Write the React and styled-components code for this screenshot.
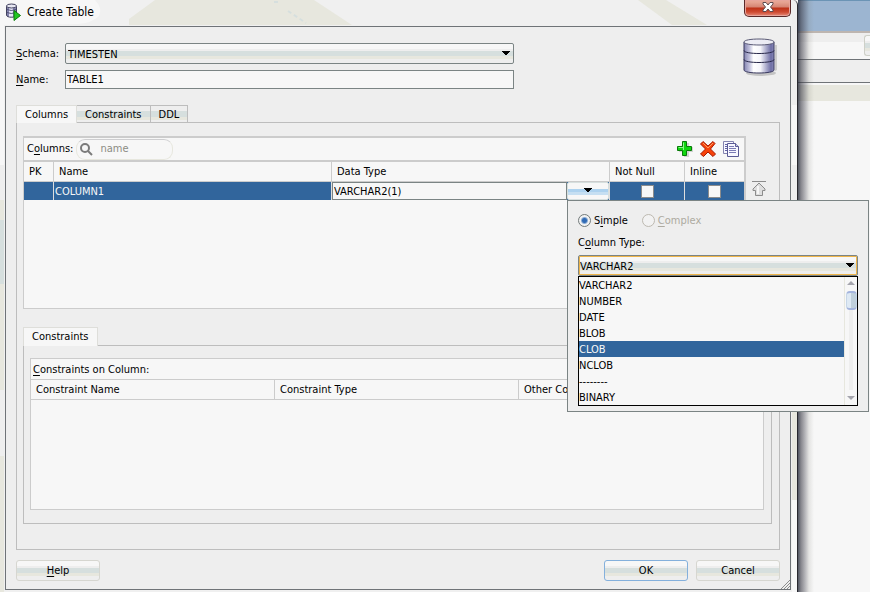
import { useState } from "react";
import styled, { createGlobalStyle, css } from "styled-components";

const types = ["VARCHAR2", "NUMBER", "DATE", "BLOB", "CLOB", "NCLOB", "--------", "BINARY"];

export default function App() {
    const [highlighted, setHighlighted] = useState("CLOB");

    return (
        <>
            <GlobalStyle />
            <Screen>
                <Dialog>
                    <TitleBar>
                        <Reflections />
                        <TitleIcon />
                        <h1>Create Table</h1>
                        <CloseButton aria-label="Close">
                            <CloseIcon />
                        </CloseButton>
                    </TitleBar>
                    <Content>
                        <Top>
                            <Fields>
                                <label htmlFor="schema"><u>S</u>chema:</label>
                                <SelectBox>
                                    <select id="schema">
                                        <option>TIMESTEN</option>
                                    </select>
                                    <Arrow />
                                </SelectBox>
                                <label htmlFor="table-name"><u>N</u>ame:</label>
                                <TextInput id="table-name" defaultValue="TABLE1" />
                            </Fields>
                            <DatabaseIcon />
                        </Top>

                        <Tabs role="tablist">
                            <Tab role="tab" aria-selected="true" $active>Columns</Tab>
                            <Tab role="tab" aria-selected="false">Constraints</Tab>
                            <Tab role="tab" aria-selected="false">DDL</Tab>
                        </Tabs>
                        <Panel>
                            <ColumnsArea>
                                <ColumnsBox>
                                    <Toolbar>
                                        <label htmlFor="search">C<u>o</u>lumns:</label>
                                        <Search>
                                            <SearchIcon />
                                            <input id="search" placeholder="name" />
                                        </Search>
                                        <IconButton aria-label="Add column"><PlusIcon /></IconButton>
                                        <IconButton aria-label="Remove column"><RemoveIcon /></IconButton>
                                        <IconButton aria-label="Copy columns"><CopyIcon /></IconButton>
                                    </Toolbar>
                                    <GridArea>
                                        <ColumnsTable>
                                            <colgroup>
                                                <col className="pk" />
                                                <col />
                                                <col />
                                                <col className="not-null" />
                                                <col className="inline" />
                                            </colgroup>
                                            <thead>
                                                <tr>
                                                    <th>PK</th>
                                                    <th>Name</th>
                                                    <th>Data Type</th>
                                                    <th>Not Null</th>
                                                    <th>Inline</th>
                                                </tr>
                                            </thead>
                                            <tbody>
                                                <tr>
                                                    <td></td>
                                                    <td>COLUMN1</td>
                                                    <td>
                                                        <TypeEditor>
                                                            <input aria-label="Data type" defaultValue="VARCHAR2(1)" />
                                                            <TypeAnchor>
                                                                <TypeButton aria-label="Choose data type"><Arrow /></TypeButton>
                                                                <TypePopup highlighted={highlighted} onPick={setHighlighted} />
                                                            </TypeAnchor>
                                                        </TypeEditor>
                                                    </td>
                                                    <td><CheckBox type="checkbox" aria-label="Not Null" /></td>
                                                    <td><CheckBox type="checkbox" aria-label="Inline" /></td>
                                                </tr>
                                            </tbody>
                                        </ColumnsTable>
                                    </GridArea>
                                </ColumnsBox>
                                <SideButtons>
                                    <IconButton aria-label="Move to top"><MoveTopIcon /></IconButton>
                                </SideButtons>
                            </ColumnsArea>

                            <ConstraintsArea>
                                <Tabs role="tablist">
                                    <Tab role="tab" aria-selected="true" $active>Constraints</Tab>
                                </Tabs>
                                <ConstraintsPanel>
                                    <ConstraintsBox>
                                        <ConstraintsTable>
                                            <caption><u>C</u>onstraints on Column:</caption>
                                            <thead>
                                                <tr>
                                                    <th>Constraint Name</th>
                                                    <th>Constraint Type</th>
                                                    <th>Other Co</th>
                                                </tr>
                                            </thead>
                                        </ConstraintsTable>
                                    </ConstraintsBox>
                                </ConstraintsPanel>
                            </ConstraintsArea>
                        </Panel>

                        <Footer>
                            <Button className="help"><u>H</u>elp</Button>
                            <Button $primary>OK</Button>
                            <Button>Cancel</Button>
                        </Footer>
                        <ResizeGrip />
                    </Content>
                </Dialog>
                <Behind>
                    <div className="title" />
                    <div className="tools"><span /></div>
                    <div className="bar" />
                    <div className="line" />
                </Behind>
            </Screen>
        </>
    );
}

function TypePopup({ highlighted, onPick }) {
    return (
        <Popup>
            <Radios>
                <label><input type="radio" name="kind" defaultChecked /><span>S<u>i</u>mple</span></label>
                <label className="disabled"><input type="radio" name="kind" disabled /><span><u>C</u>omplex</span></label>
            </Radios>
            <TypeLabel htmlFor="column-type">C<u>o</u>lumn Type:</TypeLabel>
            <SelectBox $focused>
                <select id="column-type">
                    <option>VARCHAR2</option>
                </select>
                <Arrow />
            </SelectBox>
            <TypeList>
                <ul role="listbox" aria-label="Column types">
                    {types.map((type) => (
                        <TypeOption
                            key={type}
                            role="option"
                            aria-selected={type === highlighted}
                            $selected={type === highlighted}
                            onMouseEnter={() => onPick(type)}
                        >
                            {type}
                        </TypeOption>
                    ))}
                </ul>
                <ScrollBar>
                    <svg width="8" height="4"><path d="M0 4L4 0L8 4Z" fill="#a5a5ad" /></svg>
                    <div><ScrollThumb /></div>
                    <svg width="8" height="4"><path d="M0 0L4 4L8 0Z" fill="#a5a5ad" /></svg>
                </ScrollBar>
            </TypeList>
        </Popup>
    );
}

function Arrow() {
    return (
        <svg className="arrow" width="8" height="4" shapeRendering="crispEdges">
            <path d="M0 0H8V1H7V2H6V3H5V4H3V3H2V2H1V1H0Z" fill="#000" />
        </svg>
    );
}

function Reflections() {
    return (
        <svg className="reflections" width="790" height="25">
            <path d="M0 0H95Q103 8 99 16Q92 23 78 24L0 25Z" fill="#f7f7f7" />
            <path d="M129 25V19L155 0H314L352 25Z" fill="#e7e7de" />
            <path d="M638 0H666L707 25H672Z" fill="#e7e7de" />
            <path d="M274 2H280M288 11L306 23" stroke="#d6dfde" strokeWidth="2" strokeDasharray="4 3" />
        </svg>
    );
}

function TitleIcon() {
    return (
        <svg width="16" height="18" viewBox="0 0 16 18">
            <path d="M1.500 3V12C1.500 15 11.500 15 11.500 12V3Z" fill="#8484ad" stroke="#42425f" />
            <path d="M4 4H8V13.500H4Z" fill="#e7e7f7" />
            <ellipse cx="6.500" cy="3" rx="5" ry="2" fill="#e7e7f2" stroke="#42425f" />
            <path d="M2 6.500Q6 8.500 11 6.500M2 9.500Q6 11.500 11 9.500" stroke="#52527b" fill="none" />
            <path d="M9 7.500L15.500 12.500L9 17.500Z" fill="#21c621" stroke="#087b08" />
        </svg>
    );
}

function CloseIcon() {
    return (
        <svg width="12" height="10" viewBox="0 0 12 10">
            <path d="M1 .5H4L6 3L8 .5H11V2L8.500 5L11 8V9.500H8L6 7L4 9.500H1V8L3.500 5L1 2Z" fill="#fff" stroke="#5c4a4f" />
        </svg>
    );
}

function DatabaseIcon() {
    return (
        <svg width="36" height="40" viewBox="0 0 36 40">
            <defs>
                <linearGradient id="steel">
                    <stop offset="0" stopColor="#8484b0" />
                    <stop offset=".18" stopColor="#c0c0dc" />
                    <stop offset=".32" stopColor="#fff" />
                    <stop offset=".55" stopColor="#f5f5fa" />
                    <stop offset=".9" stopColor="#6e6ea5" />
                    <stop offset="1" stopColor="#8a8ab8" />
                </linearGradient>
            </defs>
            <ellipse cx="19" cy="36" rx="15" ry="3" fill="#999" opacity=".5" />
            <path d="M33 8V34L35 33V8Z" fill="#aaa" opacity=".5" />
            <path d="M2 5V33C2 37 32 37 32 33V5Z" fill="url(#steel)" stroke="#39395f" />
            <path d="M2 5C2 1 32 1 32 5C32 9 2 9 2 5Z" fill="#ececf4" stroke="#5a5a75" />
            <path d="M2 13.500C2 17.500 32 17.500 32 13.500M2 22.500C2 26.500 32 26.500 32 22.500" fill="none" stroke="#29294a" />
        </svg>
    );
}

function SearchIcon() {
    return (
        <svg width="13" height="13" viewBox="0 0 13 13">
            <circle cx="5" cy="5" r="4" fill="none" stroke="#7b7b7b" strokeWidth="2" />
            <path d="M8 8L12 12" stroke="#7b7b7b" strokeWidth="2" />
        </svg>
    );
}

function PlusIcon() {
    return (
        <svg width="16" height="16" viewBox="0 0 16 16">
            <path d="M7 2H12V6H16V11H12V16H7V11H2V7Z" fill="#999" opacity=".4" />
            <path d="M5.500 .5H9.500V5.500H14.500V9.500H9.500V14.500H5.500V9.500H.5V5.500H5.500Z" fill="#10d610" stroke="#087b08" />
            <path d="M6.500 9V1.500M1.500 6.500H6" stroke="#8cf78c" fill="none" />
        </svg>
    );
}

function RemoveIcon() {
    return (
        <svg width="16" height="16" viewBox="0 0 16 16">
            <path d="M3 .5L8 5L13 .5L15 2.500L10.500 8L15.500 13L13 15.500L8 11L3.500 15.500L.5 13L5.500 8L.5 3Z" fill="#f7420a" stroke="#a51800" />
            <path d="M3 2L8 7L13 2" stroke="#ff9c63" fill="none" />
        </svg>
    );
}

function CopyIcon() {
    return (
        <svg width="16" height="16" viewBox="0 0 16 16">
            <path d="M.5 .5H10.500V12.500H.5Z" fill="#f7f7ff" stroke="#8484b0" />
            <path d="M2 3.500H4M2 5.500H4M2 7.500H4M2 9.500H4" stroke="#6363a5" />
            <path d="M4.500 2.500H12.500L15.500 5.500V15.500H4.500Z" fill="#f7f7ff" stroke="#5a5a94" />
            <path d="M12.500 2.500V5.500H15.500" fill="#c6c6e7" stroke="#5a5a94" />
            <path d="M6 5.500H11M6 7.500H13M6 9.500H13M6 11.500H13" stroke="#7b7bb5" />
        </svg>
    );
}

function MoveTopIcon() {
    return (
        <svg width="16" height="16" viewBox="0 0 16 16">
            <path d="M1 .5H15" stroke="#8c8c8c" />
            <path d="M8 2L14 8V9.500H11.500V14.500H4.500V9.500H2V8Z" fill="#dedede" stroke="#8c8c8c" />
            <path d="M7 5V13" stroke="#f7f7f7" strokeWidth="2" />
        </svg>
    );
}

function ResizeGrip() {
    return (
        <svg className="grip" width="9" height="9" viewBox="0 0 9 9">
            <path d="M0 9L9 0M3 9L9 3M6 9L9 6" stroke="#8c8c8c" />
        </svg>
    );
}

const GlobalStyle = createGlobalStyle`
    *{
        box-sizing: border-box;
    }
    body{
        margin: 0;
        background-color: #f7f7f7;
        color: #000000;
    }
    body, button, input, select{
        font-family: "DejaVu Sans Condensed", "Noto Sans", sans-serif;
        font-size: 11px;
        line-height: 14px;
    }
    button, input, select{
        margin: 0;
        padding: 0;
        color: inherit;
    }
    svg{
        display: block;
        flex-shrink: 0;
    }
    u{
        text-underline-offset: 2px;
    }
`;

const glossy = css`
    background: linear-gradient(#f7f7f7 5px, #eeeeee 5px 7px, #d6dfde 7px 12px, #e7e7de 12px 15px, #eeeeee 15px);
`;

const Screen = styled.div`
    display: flex;
    min-height: 100vh;
    overflow: hidden;
`;

const Dialog = styled.main`
    flex: 1;
    min-width: 0;
    display: flex;
    flex-direction: column;
    padding: 0 6px 2px 5px;
    border-right: 1px solid #29292f;
    border-top-right-radius: 5px;
    background: linear-gradient(#f7f7f7 165px, #eeeeee 165px 200px, #e7e7de 200px 220px, #d6dfde 220px 284px, #e7e7de 284px 390px, #eeeeee 390px 456px, #e7e7de 456px) left / 4px 100% no-repeat,
        linear-gradient(#eeeeee 105px, #f7f7f7 105px 165px, #eeeeee 165px 412px, #e7e7de 412px 500px, #f7f7f7 500px) right / 5px 100% no-repeat,
        #f0f0f0;
`;

const TitleBar = styled.header`
    position: relative;
    display: flex;
    align-items: flex-start;
    gap: 6px;
    height: 26px;
    h1{
        position: relative;
        flex: 1;
        margin: 0;
        padding-top: 4px;
        font-size: 12px;
        line-height: 16px;
        font-weight: normal;
    }
    > svg{
        position: relative;
        margin-top: 3px;
    }
    > .reflections{
        position: absolute;
        top: 0;
        left: -5px;
        margin: 0;
    }
`;

const CloseButton = styled.button`
    position: relative;
    display: flex;
    align-items: center;
    justify-content: center;
    width: 47px;
    height: 17px;
    padding-bottom: 2px;
    border: 1px solid #5a2929;
    border-top: none;
    border-radius: 0 0 5px 5px;
    background: linear-gradient(#e7a594 2px, #d68473 7px, #bd3118 8px, #ce4a31 12px, #e78c7b 16px);
    box-shadow: inset 0 0 0 1px #e7a59c;
`;

const Content = styled.div`
    position: relative;
    flex: 1;
    display: flex;
    flex-direction: column;
    padding: 16px 10px 8px;
    border: 1px solid #6f7377;
    background-color: #eeeeee;
    > .grip{
        position: absolute;
        right: 0;
        bottom: 0;
    }
`;

const Top = styled.div`
    display: flex;
    justify-content: space-between;
    margin-bottom: 9px;
    > svg{
        margin: -6px 2px 0 0;
    }
`;

const Fields = styled.div`
    display: grid;
    grid-template-columns: 49px minmax(100px, 449px);
    row-gap: 6px;
    align-content: start;
    align-items: center;
    flex: 1;
    height: 53px;
    label{
        white-space: nowrap;
    }
`;

const SelectBox = styled.div`
    position: relative;
    display: flex;
    select{
        flex: 1;
        height: 21px;
        padding: 2px 0 0 2px;
        appearance: none;
        border: 1px solid #7b8484;
        border-radius: 2px;
        outline: none;
        ${glossy}
        ${(props) => props.$focused && css`
            padding-left: 1px;
            box-shadow: inset 0 0 0 1px #efb54a;
        `}
    }
    .arrow{
        position: absolute;
        top: 8px;
        right: 4px;
        pointer-events: none;
    }
`;

const TextInput = styled.input`
    height: 19px;
    padding-left: 1px;
    border: 1px solid #7b8484;
    background-color: #f7f7f7;
`;

const Tabs = styled.div`
    display: flex;
    height: 17px;
`;

const Tab = styled.button`
    height: 17px;
    padding: 1px 8px 0;
    border: 1px solid #bdbdbd;
    border-left: none;
    border-bottom: none;
    background: linear-gradient(#eeeeee 5px, #d6dfde 5px 11px, #e7e7de 11px 14px, #eeeeee 14px);
    ${(props) => props.$active && css`
        height: 18px;
        padding-top: 0;
        border-color: #dededa;
        border-left: 1px solid #dededa;
        background: #f7f7f7;
        z-index: 1;
    `}
`;

const Panel = styled.section`
    flex: 1;
    display: flex;
    flex-direction: column;
    padding: 13px 0 25px 6px;
    border: 1px solid #bdbdbd;
`;

const ColumnsArea = styled.div`
    flex: 173 0 173px;
    display: flex;
`;

const ColumnsBox = styled.div`
    flex: 1;
    min-width: 0;
    display: flex;
    flex-direction: column;
`;

const SideButtons = styled.div`
    width: 33px;
    padding: 45px 0 0 5px;
`;

const IconButton = styled.button`
    border: none;
    background: none;
`;

const Toolbar = styled.div`
    display: flex;
    align-items: center;
    gap: 3px;
    height: 26px;
    padding: 0 5px 0 3px;
    border: 2px solid #cccccc;
    border-left-width: 1px;
    background-color: #f7f7f7;
    ${IconButton}{
        margin-left: 4px;
    }
`;

const Search = styled.div`
    display: flex;
    align-items: center;
    gap: 7px;
    width: 97px;
    height: 21px;
    margin-right: auto;
    padding-left: 3px;
    border: 1px solid #e7e7de;
    border-top-color: #ceced0;
    border-radius: 9px;
    input{
        width: 60px;
        border: none;
        background: none;
        outline: none;
    }
    input::placeholder{
        color: #8c8c84;
        opacity: 1;
    }
`;

const GridArea = styled.div`
    flex: 1;
    border: 1px solid #cccccc;
    border-top: none;
    border-right-width: 2px;
    background-color: #f7f7f7;
`;

const ColumnsTable = styled.table`
    width: 100%;
    table-layout: fixed;
    border-collapse: separate;
    border-spacing: 0;
    .pk{
        width: 30px;
    }
    .not-null{
        width: 75px;
    }
    .inline{
        width: 59px;
    }
    th{
        height: 20px;
        padding: 0 5px;
        border-right: 1px solid #cccccc;
        border-bottom: 1px solid #cccccc;
        font-weight: normal;
        text-align: left;
    }
    td{
        height: 18px;
        padding: 2px 1px 0;
        border-right: 1px solid #dedede;
        background-color: #31659c;
        color: #f7f7f7;
    }
    td:nth-child(3){
        padding: 0;
    }
    td:nth-child(n + 4){
        padding-top: 1px;
        text-align: center;
    }
    th:last-child, td:last-child{
        border-right: none;
    }
`;

const TypeEditor = styled.div`
    display: flex;
    height: 18px;
    color: #000000;
    > input{
        flex: 1;
        min-width: 0;
        padding: 2px 0 0 1px;
        border: 1px solid #7b8484;
        background-color: #f7f7f7;
    }
`;

const TypeAnchor = styled.div`
    position: relative;
    width: 42px;
`;

const TypeButton = styled.button`
    display: flex;
    justify-content: center;
    padding-top: 5px;
    width: 100%;
    height: 18px;
    border: 1px solid #d6dfde;
    border-radius: 2px;
    background: linear-gradient(#f7f7f7 6px, #add2ef 6px 9px, #c6dff2 9px 12px, #f7f7f7 12px);
`;

const CheckBox = styled.input`
    display: block;
    width: 13px;
    height: 13px;
    margin: 0 auto;
    appearance: none;
    border: 1px solid #8c8c8c;
    background-color: #f7f7f7;
    &:checked{
        background-color: #31659c;
    }
`;

const Popup = styled.div`
    position: absolute;
    top: 18px;
    left: 0;
    z-index: 5;
    width: 302px;
    padding: 13px 10px 5px;
    border: 1px solid #7b8484;
    background-color: #eeeeee;
    text-align: left;
`;

const Radios = styled.div`
    display: flex;
    gap: 14px;
    label{
        display: flex;
        align-items: flex-start;
        gap: 3px;
    }
    .disabled{
        color: #adaaa0;
    }
    input{
        width: 13px;
        height: 13px;
        appearance: none;
        border: 1px solid #737b7b;
        border-radius: 50%;
        background-color: #f2f2f2;
    }
    input:checked{
        background: radial-gradient(#316bb5 2px, #8cadd6 3px, #f2f2f2 4px);
    }
    input:disabled{
        border-color: #bdb9b0;
    }
`;

const TypeLabel = styled.label`
    display: block;
    margin: 8px 0 5px;
`;

const TypeList = styled.div`
    display: flex;
    border: 1px solid #000000;
    background-color: #f7f7f7;
    ul{
        flex: 1;
        margin: 0;
        padding: 0;
        list-style: none;
    }
`;

const TypeOption = styled.li`
    padding-top: 2px;
    ${(props) => props.$selected && css`
        background-color: #31659c;
        color: #f7f7f7;
    `}
`;

const ScrollBar = styled.div`
    display: flex;
    flex-direction: column;
    align-items: center;
    gap: 6px;
    width: 13px;
    padding: 4px 0 5px;
    border-left: 1px solid #e7e7de;
    > div{
        flex: 1;
        width: 4px;
        display: flex;
        justify-content: center;
        background-color: #eeeeee;
    }
`;

const ScrollThumb = styled.span`
    flex-shrink: 0;
    width: 11px;
    height: 19px;
    border: 1px solid #c6d6e7;
    border-top: 2px solid #a5b5de;
    border-bottom: 2px solid #a5b5de;
    border-radius: 4px;
    background: linear-gradient(90deg, #dee9f4 4px, #c0d0dc 4px);
`;

const ConstraintsArea = styled.div`
    flex: 197 0 197px;
    display: flex;
    flex-direction: column;
    margin: 18px 7px 0 0;
    ${Tabs}{
        height: 18px;
    }
    ${Tab}{
        height: 19px;
        padding: 0 9px 0 8px;
    }
`;

const ConstraintsPanel = styled.div`
    flex: 1;
    display: flex;
    padding: 12px 7px 13px 6px;
    border: 1px solid #bdbdbd;
`;

const ConstraintsBox = styled.div`
    flex: 1;
    border: 1px solid #cccccc;
    background-color: #f7f7f7;
`;

const ConstraintsTable = styled.table`
    width: 100%;
    table-layout: fixed;
    border-spacing: 0;
    caption{
        height: 20px;
        padding-left: 2px;
        line-height: 21px;
        text-align: left;
    }
    th{
        height: 21px;
        padding: 0 5px;
        border: 1px solid #cccccc;
        border-left: none;
        font-weight: normal;
        text-align: left;
    }
    th:last-child{
        border-right: none;
    }
`;

const Footer = styled.footer`
    display: flex;
    gap: 8px;
    margin-top: 10px;
    .help{
        margin-right: auto;
    }
`;

const Button = styled.button`
    width: 84px;
    height: 21px;
    border: 1px solid #d6d6d0;
    border-radius: 3px;
    ${glossy}
    ${(props) => props.$primary && css`
        border-color: #84b0dc;
    `}
`;

const Behind = styled.aside`
    position: relative;
    flex: 0 0 72px;
    background-color: #f7f7f7;
    /* shadow that the dialog casts over the window behind it */
    &::before{
        content: "";
        position: absolute;
        inset: 0 auto 0 0;
        width: 16px;
        background: linear-gradient(90deg, rgba(40, 45, 60, .8), rgba(60, 60, 70, .6) 3px, rgba(80, 80, 90, .4) 7px, rgba(120, 120, 110, .15) 11px, transparent);
    }
    .title{
        height: 33px;
        border-top: 1px solid #6b94b5;
        border-bottom: 2px solid #bdb5b0;
        background-color: #9cb5d1;
    }
    .tools{
        display: flex;
        justify-content: flex-end;
        height: 27px;
        padding-top: 2px;
        border-bottom: 1px solid #6f7377;
        background: linear-gradient(#eeeeee 9px, #f7f7f7 9px);
    }
    .tools span{
        width: 6px;
        height: 21px;
        border: 1px solid #ced0c8;
        border-right: none;
        border-radius: 3px 0 0 3px;
        ${glossy}
    }
    .bar{
        height: 23px;
        border-bottom: 1px solid #6f7377;
        background-color: #eeeeee;
    }
    .line{
        height: 16px;
        margin-top: 2px;
        background-color: #e7e7de;
    }
`;
